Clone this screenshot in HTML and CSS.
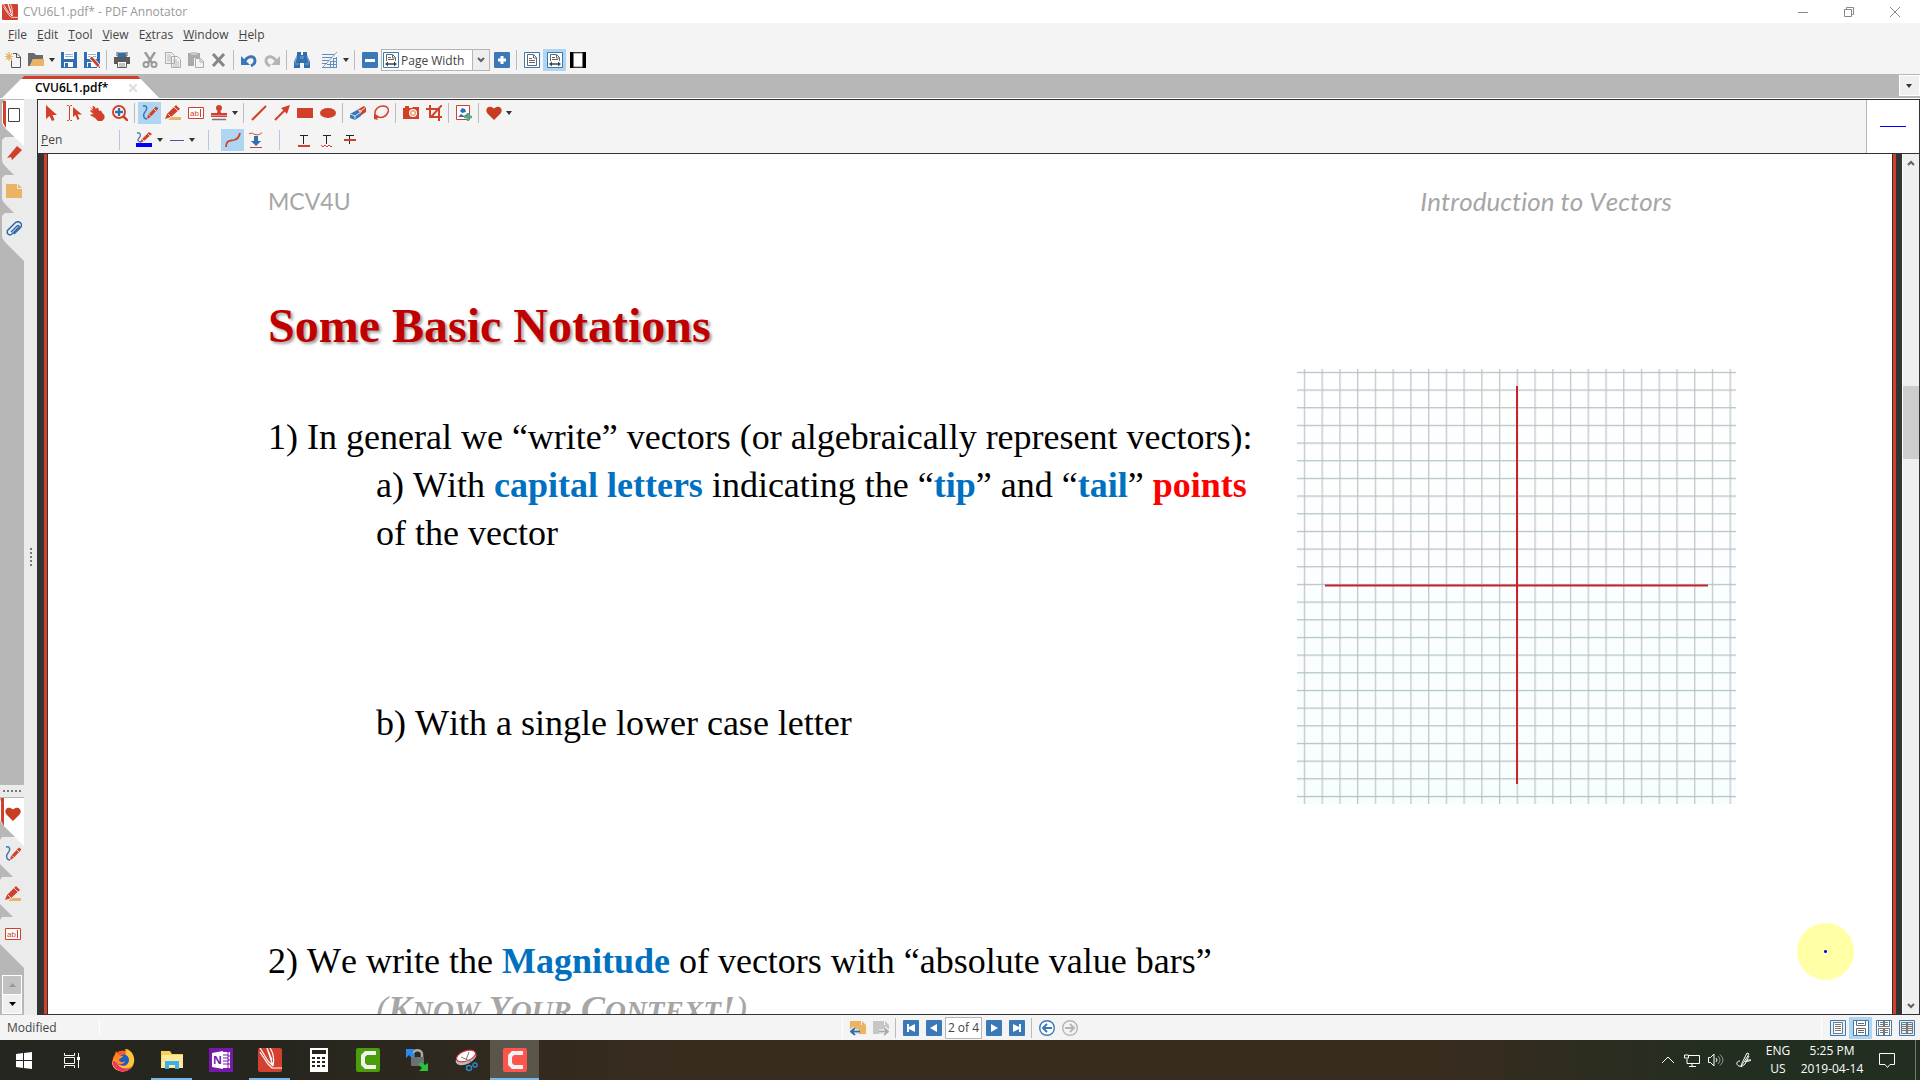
FILE: index.html
```
<!DOCTYPE html>
<html lang="en">
<head>
  <meta charset="UTF-8">
  <title>CVU6L1.pdf* - PDF Annotator</title>
  <meta name="viewport" content="width=device-width, initial-scale=1.0">
  <link rel="stylesheet" href="styles.css">
</head>
<body>
  <!-- icon sprite -->
  <svg class="sprite" aria-hidden="true">
    <symbol id="i-new" viewBox="0 0 16 16"><path d="M8 1.500h4l3.500 3.500v10.500h-9v-7M11.500 1.500v4h4" fill="none" stroke="#555" stroke-width="1"/><path d="M4 0v9M0 4.500h8M1 1.500l6 6M7 1.500l-6 6" stroke="#eab464" stroke-width="1.200"/></symbol>
    <symbol id="i-open" viewBox="0 0 16 16"><path d="M0 1h6l2 2h7v4H5L2 14H0z" fill="#6a6a6a"/><path d="M5 7h11v7H2z" fill="#eab464"/></symbol>
    <symbol id="i-save" viewBox="0 0 16 16"><path d="M0 0h16v16H0z" fill="#2f6fb0"/><path d="M3 0h10v7H3zM3 10h9v5H3z" fill="#fff"/><path d="M4 2h8v1H4zM4 4h8v1H4z" fill="#8fb3d6"/><path d="M4 11h3v4H4z" fill="#2f6fb0"/></symbol>
    <symbol id="i-print" viewBox="0 0 16 16"><path d="M3 0h10v4H3z" fill="#fff" stroke="#555"/><path d="M4 1h8v4H4z" fill="#2f6fb0"/><path d="M0 5h16v7H0z" fill="#5a5a5a"/><path d="M3.500 9.500h9v6h-9z" fill="#fff" stroke="#5a5a5a"/><path d="M5 12h6M5 14h6" stroke="#8a8a8a"/></symbol>
    <symbol id="i-cut" viewBox="0 0 16 16"><path d="M3 0l7 11M13 0L6 11" stroke="#9a9a9a" stroke-width="2.400"/><circle cx="4" cy="12.500" r="2.500" fill="none" stroke="#9a9a9a" stroke-width="2"/><circle cx="12" cy="12.500" r="2.500" fill="none" stroke="#9a9a9a" stroke-width="2"/></symbol>
    <symbol id="i-copy" viewBox="0 0 16 16"><path d="M.5.5h6l3 3v8h-9zM6.500 4.500h6l3 3v8h-9z" fill="#f4f4f4" stroke="#aaa"/><path d="M2 3h4M2 5h4M2 7h4M2 9h4M8 8h4M8 10h6M8 12h6M8 14h6" stroke="#b5b5b5"/></symbol>
    <symbol id="i-paste" viewBox="0 0 16 16"><path d="M0 1h12v5H6v8H0z" fill="#aaa"/><path d="M3 0h6v3H3z" fill="#c9c9c9"/><path d="M7.500 6.500h5l3 3v6h-8zM12 7v3h3" fill="#f4f4f4" stroke="#aaa"/></symbol>
    <symbol id="i-delete" viewBox="0 0 16 16"><path d="M2 2l11 12M13 2L2 14" stroke="#868686" stroke-width="3"/></symbol>
    <symbol id="i-undo" viewBox="0 0 16 16"><path d="M3 11C5 4 14 2 14 9c0 3-2 4-4 5" fill="none" stroke="#3b78b8" stroke-width="3"/><path d="M0 4v9h9z" fill="#3b78b8"/></symbol>
    <symbol id="i-redo" viewBox="0 0 16 16"><path d="M13 11C11 4 2 2 2 9c0 3 2 4 4 5" fill="none" stroke="#b5b5b5" stroke-width="3"/><path d="M16 4v9H7z" fill="#b5b5b5"/></symbol>
    <symbol id="i-find" viewBox="0 0 16 16"><path d="M3 0h4v3h2V0h4v3l3 7v6h-6v-5H6v5H0v-6l3-7z" fill="#2f6fb0"/><path d="M3 4l-2 7M13 4l2 7M7 4v3M9 4v3M1 12h4M11 12h4" stroke="#9ec0e0" stroke-width=".7"/></symbol>
    <symbol id="i-notes" viewBox="0 0 16 16"><path d="M0 2.500h12M0 5.500h10M0 8.500h7M0 11.500h5M0 15.500h15M5 12.500h10M8 9.500h7M11 6.500h4M14.500 5v11M11.500 7v9M8.500 10v6" stroke="#5d8fc2"/><path d="M15 0L1 15" stroke="#777" stroke-width=".7"/></symbol>
    <symbol id="i-minus" viewBox="0 0 16 16"><rect width="16" height="16" rx="1" fill="#3b78b8"/><path d="M3 8.500h10" stroke="#fff" stroke-width="3"/></symbol>
    <symbol id="i-plus" viewBox="0 0 16 16"><rect width="16" height="16" rx="1" fill="#3b78b8"/><path d="M4 8h8M8 4v8" stroke="#fff" stroke-width="3"/></symbol>
    <symbol id="i-page" viewBox="0 0 16 16"><path d="M.5.5h15v15H.5z" fill="#fff" stroke="#3b78b8"/><path d="M3.500 2.500h6l3 3v8h-9zM9.500 3v3h3M5 6.500h3M5 8.500h6M5 10.500h6" fill="none" stroke="#666"/></symbol>
    <symbol id="i-width" viewBox="0 0 16 16"><path d="M.5.5h15v15H.5z" fill="#fff" stroke="#3b78b8"/><path d="M3.500 9V2.500h6l3 3V9M9.500 3v3h3M5 5.500h3M5 7.500h6" fill="none" stroke="#666"/><path d="M4 12h8" stroke="#444" stroke-width="1.500"/><path d="M5 9.500L2 12l3 2.500zM11 9.500l3 2.500-3 2.500z" fill="#444"/></symbol>
    <symbol id="i-full" viewBox="0 0 16 16"><path d="M0 0h16v16H0z"/><path d="M3.500 1h9v14h-9z" fill="#fff" stroke="#777"/></symbol>
    <symbol id="i-dd" viewBox="0 0 7 4"><path d="M0 0h6L3 4z" fill="#333"/></symbol>
    <symbol id="i-chev" viewBox="0 0 8 8"><path d="M1 2l3 3 3-3" fill="none" stroke="#606060" stroke-width="2"/></symbol>
    <symbol id="i-arrow" viewBox="0 0 16 16"><path d="M3 0v14l3.500-3L9 16l2.500-1-2-5H14z" fill="#d2402a"/></symbol>
    <symbol id="i-textarrow" viewBox="0 0 16 16"><path d="M1 .5h1.500l1 1 1-1H6M1 15.500h1.500l1-1 1 1H6M3.500 1v14" stroke="#d2402a" fill="none"/><path d="M7 2v10l2.500-2 2 5 2-1-2-4.500H16z" fill="#d2402a"/></symbol>
    <symbol id="i-hand" viewBox="0 0 16 16"><path d="M1 2l3 2.500L3.500 1l2 .5L7 4l1-1.500 1.500 1L10 6l2-.5 1 2 2.500 3v3L13 16H9l-3-3-5-3 2-1 2 .5L1 6l1-1 2 1z" fill="#d2402a"/></symbol>
    <symbol id="i-zoom" viewBox="0 0 16 16"><circle cx="7" cy="7" r="6" fill="#fff" stroke="#d2402a" stroke-width="2"/><path d="M11 11l5 5" stroke="#d2402a" stroke-width="2.500"/><path d="M3 7h8M7 3v8" stroke="#2f6fb0" stroke-width="2.400"/></symbol>
    <symbol id="i-pen" viewBox="0 0 16 16"><path d="M1 1c5-1 4 4 2 6s-2 7 2 7" fill="none" stroke="#3b78b8" stroke-width="1.500"/><path d="M5 14l1-4 8-8.500 2.500 2L8.500 12z" fill="#d2402a"/><path d="M7 9.500l2 2M12 4l2 2" stroke="#fff" stroke-width=".8"/></symbol>
    <symbol id="i-marker" viewBox="0 0 16 16"><path d="M7 12h9v3H3z" fill="#eab464"/><path d="M0 14l2-5 9-9 4 4-9 8z" fill="#d2402a"/><path d="M3 9l3 3M9 2l4 4" stroke="#fff" stroke-width=".8"/></symbol>
    <symbol id="i-abl" viewBox="0 0 16 16"><path d="M.5 2.500h15v11H.5z" fill="#fff" stroke="#d2402a"/><text x="2" y="11" font-size="8" font-family="Liberation Sans, sans-serif" fill="#d2402a">ab</text><path d="M12.500 4v8" stroke="#d2402a"/></symbol>
    <symbol id="i-stamp" viewBox="0 0 16 16"><circle cx="8" cy="3" r="3" fill="#d2402a"/><path d="M7 4h2l1 4h6v4H0V8h6z" fill="#d2402a"/><path d="M0 10.500h16" stroke="#e08ab8"/><path d="M1 14.500h14" stroke="#777" stroke-width="1.500"/></symbol>
    <symbol id="i-line" viewBox="0 0 16 16"><path d="M1 15L15 1" stroke="#d2402a" stroke-width="2"/></symbol>
    <symbol id="i-vec" viewBox="0 0 16 16"><path d="M1 15L12 4" stroke="#d2402a" stroke-width="2"/><path d="M16 0l-3 9-6-6z" fill="#d2402a"/></symbol>
    <symbol id="i-rect" viewBox="0 0 16 16"><path d="M0 3h16v10H0z" fill="#d2402a"/></symbol>
    <symbol id="i-ellipse" viewBox="0 0 16 16"><ellipse cx="8" cy="8" rx="8" ry="5" fill="#d2402a"/></symbol>
    <symbol id="i-eraser" viewBox="0 0 16 16"><path d="M7 5l7-4 2 2v4l-6 4z" fill="#d2402a"/><path d="M0 9l7-4 4 2v4l-6 4-5-2z" fill="#3b78b8"/><path d="M0 9l5 2 6-4M5 11v3.500M8 5l4 1.500M9 7l6-4" stroke="#fff" stroke-width=".8" fill="none"/></symbol>
    <symbol id="i-lasso" viewBox="0 0 16 16"><path d="M3 11C0 7 4 1 10 1c5 0 7 4 4 8-2 3-6 4-10 3" fill="none" stroke="#d2402a" stroke-width="1.500"/><path d="M1 9l5 2-2 2 1 2-4-1z" fill="#d2402a"/></symbol>
    <symbol id="i-camera" viewBox="0 0 16 16"><path d="M0 3h2V1h4v2h3l1-1h6v12H0z" fill="#d2402a"/><circle cx="10" cy="8" r="4" fill="#fff"/><circle cx="10" cy="8" r="3" fill="#eba070"/><circle cx="10" cy="8" r="1.500" fill="#fff"/></symbol>
    <symbol id="i-crop" viewBox="0 0 16 16"><path d="M0 4h13v12M4 0v12h12M5 12L16 0" fill="none" stroke="#d2402a" stroke-width="2"/></symbol>
    <symbol id="i-image" viewBox="0 0 16 16"><path d="M.5.500h13v14H.5z" fill="#fff" stroke="#d2402a"/><path d="M2 12l3-3 3 2 4-3v4zM4 6l2-3 3 1 1 3-4 1z" fill="#2f6fb0"/><path d="M8 12h8M12 8v8" stroke="#4bb18a" stroke-width="2.500"/></symbol>
    <symbol id="i-heart" viewBox="0 0 16 16"><path d="M8 15L1.500 8.500C-2 4 3-1 8 3.500 13-1 18 4 14.500 8.500z" fill="#c63d20"/></symbol>
    <symbol id="i-pencolor" viewBox="0 0 16 16"><path d="M1 1c4-1 4 3 2 5s-1 4 2 4" fill="none" stroke="#3b78b8" stroke-width="1.300"/><path d="M4 11l1-3 8-8 3 2-8 7z" fill="#d2402a"/><path d="M6 7l2 2M12 2l2 2" stroke="#fff" stroke-width=".8"/><path d="M0 11h16v4H0z" fill="#00f"/></symbol>
    <symbol id="i-thin" viewBox="0 0 16 16"><path d="M1 8.500h14" stroke="#4a5a8a"/></symbol>
    <symbol id="i-curve" viewBox="0 0 16 16"><path d="M1 15c0-7 4-6 8-7 3-1 5-2 6-7" fill="none" stroke="#d2402a" stroke-width="1.800"/></symbol>
    <symbol id="i-press" viewBox="0 0 16 16"><path d="M1 2c3-2 4 0 6 .5S12 3 14 .5M2 15.500h12" fill="none" stroke="#d2402a"/><path d="M6 4h4v5h3l-5 5-5-5h3z" fill="#2f6fb0"/></symbol>
    <symbol id="i-tu" viewBox="0 0 16 16"><path d="M4 3.500h8M7.500 3v9" stroke="#222"/><path d="M2 14h12" stroke="#d2402a" stroke-width="2"/></symbol>
    <symbol id="i-tw" viewBox="0 0 16 16"><path d="M4 3.500h8M7.500 3v9" stroke="#222"/><path d="M2 13l2 2 2-2 2 2 2-2 2 2 1-1" fill="none" stroke="#d2402a"/></symbol>
    <symbol id="i-ts" viewBox="0 0 16 16"><path d="M4 3.500h8M7.500 3v9" stroke="#222"/><path d="M2 8h12" stroke="#d2402a" stroke-width="2"/></symbol>
    <symbol id="i-sheet" viewBox="0 0 16 16"><path d="M2.500 1.500h11v13h-11z" fill="#fff" stroke="#444"/></symbol>
    <symbol id="i-mark" viewBox="0 0 16 16"><path d="M11 1l5 4L6 15l-1-3-4 1z" fill="#d2402a"/></symbol>
    <symbol id="i-note" viewBox="0 0 16 16"><path d="M0 1h11v5h5v9H0zM12 1l4 4h-4z" fill="#eab464"/></symbol>
    <symbol id="i-clip" viewBox="0 0 16 16"><path d="M5 11l6-6c1.500-1 3 0 1.500 1.500L6 13c-2 2-6 0-4.500-3.500L9 2c3-3 8 0 6 4l-7 7" fill="none" stroke="#2a65a8" stroke-width="1.400"/></symbol>
    <symbol id="i-noteback" viewBox="0 0 16 16"><path d="M0 1h11v4h5v9H0zM12 1l4 4h-4z" fill="#eab464"/><path d="M9 11.500H1M5 8l-4 3.500L5 15" stroke="#fff" stroke-width="4" fill="none"/><path d="M10 11.500H1M5 8l-4 3.500L5 15" stroke="#2f6fb0" stroke-width="2" fill="none"/></symbol>
    <symbol id="i-notefwd" viewBox="0 0 16 16"><path d="M0 1h11v4h5v9H0zM12 1l4 4h-4z" fill="#c6c6c6"/><path d="M6 11.500h9M11 8l4 3.500-4 3.500" stroke="#fff" stroke-width="4" fill="none"/><path d="M6 11.500h9M11 8l4 3.500-4 3.500" stroke="#aaa" stroke-width="2" fill="none"/></symbol>
    <symbol id="i-first" viewBox="0 0 16 16"><rect width="16" height="16" rx="1" fill="#3b78b8"/><path d="M4 4h2v3l6-3v8L6 9v3H4z" fill="#fff"/></symbol>
    <symbol id="i-prev" viewBox="0 0 16 16"><rect width="16" height="16" rx="1" fill="#3b78b8"/><path d="M4 8l7-4v8z" fill="#fff"/></symbol>
    <symbol id="i-next" viewBox="0 0 16 16"><rect width="16" height="16" rx="1" fill="#3b78b8"/><path d="M12 8L5 4v8z" fill="#fff"/></symbol>
    <symbol id="i-last" viewBox="0 0 16 16"><rect width="16" height="16" rx="1" fill="#3b78b8"/><path d="M12 4h-2v3L4 4v8l6-3v3h2z" fill="#fff"/></symbol>
    <symbol id="i-back" viewBox="0 0 16 16"><circle cx="8" cy="8" r="7.300" fill="#fff" stroke="#3b78b8" stroke-width="1.400"/><path d="M13 8H4M8 4L4 8l4 4" fill="none" stroke="#3b78b8" stroke-width="2"/></symbol>
    <symbol id="i-fwd" viewBox="0 0 16 16"><circle cx="8" cy="8" r="7.300" fill="none" stroke="#b5b5b5" stroke-width="1.400"/><path d="M3 8h9M8 4l4 4-4 4" fill="none" stroke="#b5b5b5" stroke-width="2"/></symbol>
    <symbol id="i-v1" viewBox="0 0 16 16"><path d="M.5.5h15v15H.5z" fill="#e8f1fa" stroke="#3b78b8"/><path d="M3.500 2.500h9v11h-9z" fill="#fff" stroke="#777"/><path d="M5 4.500h6M5 6.500h6M5 8.500h6M5 10.500h6" stroke="#777"/></symbol>
    <symbol id="i-v2" viewBox="0 0 16 16"><path d="M.5.5h15v15H.5z" fill="#fff" stroke="#3b78b8"/><path d="M3.500 1v4.500h9V1M3.500 15V8.500h9V15M5 3.500h6M5 10.500h6M5 12.500h6" fill="none" stroke="#666"/></symbol>
    <symbol id="i-v3" viewBox="0 0 16 16"><path d="M.5.5h15v15H.5z" fill="#fff" stroke="#3b78b8"/><path d="M2.500 1v5.500h11V1M2.500 15V8.500h11V15M7.500 1v5.500M7.500 9v6M8.500 1v5.500M8.500 9v6M4 2.500h8M4 4.500h8M4 10.500h8M4 12.500h8" fill="none" stroke="#777"/></symbol>
    <symbol id="i-v4" viewBox="0 0 16 16"><path d="M.5.5h15v15H.5z" fill="#e8f1fa" stroke="#3b78b8"/><path d="M2.500 2.500h11v11h-11zM7.500 3v10M8.500 3v10M3 4.500h10M3 6.500h10M3 8.500h10M3 10.500h10" fill="none" stroke="#777"/></symbol>
    <symbol id="i-logo" viewBox="0 0 24 24"><rect width="24" height="24" rx="2" fill="#d2402f"/><path d="M2 0l8 13 5 5L9 0M9 0l5 12M12 0c4 6 4 13 3 18M2 4l8 12 4 4h10" fill="none" stroke="#fff" stroke-width="1.200"/></symbol>
  </svg>

  <div class="app">
    <header class="titlebar">
      <svg class="icon"><use href="#i-logo"/></svg>
      <span class="title">CVU6L1.pdf* - PDF Annotator</span>
      <div class="window-buttons">
        <button aria-label="Minimize"><svg viewBox="0 0 10 10"><path d="M0 5.500h10"/></svg></button>
        <button aria-label="Restore"><svg viewBox="0 0 10 10"><path d="M.5 2.500h7v7h-7zM2.500 2V.5h7v7H8"/></svg></button>
        <button aria-label="Close"><svg viewBox="0 0 10 10"><path d="M0 0l10 10M10 0L0 10"/></svg></button>
      </div>
    </header>

    <nav class="menubar">
      <button><u>F</u>ile</button>
      <button><u>E</u>dit</button>
      <button><u>T</u>ool</button>
      <button><u>V</u>iew</button>
      <button>E<u>x</u>tras</button>
      <button><u>W</u>indow</button>
      <button><u>H</u>elp</button>
    </nav>

    <div class="toolbar main-toolbar">
      <button class="tool" aria-label="New"><svg class="icon"><use href="#i-new"/></svg></button>
      <button class="tool" aria-label="Open"><svg class="icon"><use href="#i-open"/></svg></button>
      <button class="drop" aria-label="Recent files"><svg><use href="#i-dd"/></svg></button>
      <button class="tool" aria-label="Save"><svg class="icon"><use href="#i-save"/></svg></button>
      <button class="tool" aria-label="Save as"><svg class="icon" viewBox="0 0 16 16"><use href="#i-save" width="16" height="16"/><path d="M5 6l3-2 8 9-2 3z" fill="#d2402a" stroke="#fff"/></svg></button>
      <span class="sep"></span>
      <button class="tool" aria-label="Print"><svg class="icon"><use href="#i-print"/></svg></button>
      <span class="gap"></span>
      <button class="tool" aria-label="Cut"><svg class="icon"><use href="#i-cut"/></svg></button>
      <button class="tool" aria-label="Copy"><svg class="icon"><use href="#i-copy"/></svg></button>
      <button class="tool" aria-label="Paste"><svg class="icon"><use href="#i-paste"/></svg></button>
      <button class="tool" aria-label="Delete"><svg class="icon"><use href="#i-delete"/></svg></button>
      <span class="sep"></span>
      <button class="tool" aria-label="Undo"><svg class="icon"><use href="#i-undo"/></svg></button>
      <button class="tool" aria-label="Redo"><svg class="icon"><use href="#i-redo"/></svg></button>
      <span class="sep"></span>
      <button class="tool" aria-label="Find"><svg class="icon"><use href="#i-find"/></svg></button>
      <span class="gap"></span>
      <button class="tool" aria-label="Page background"><svg class="icon"><use href="#i-notes"/></svg></button>
      <button class="drop" aria-label="Background options"><svg><use href="#i-dd"/></svg></button>
      <span class="sep"></span>
      <button class="tool" aria-label="Zoom out"><svg class="icon"><use href="#i-minus"/></svg></button>
      <div class="zoom-box">
        <svg class="icon"><use href="#i-width"/></svg>
        <select aria-label="Zoom"><option>Page Width</option><option>Full Page</option></select>
        <span class="zoom-arrow"><svg><use href="#i-chev"/></svg></span>
      </div>
      <button class="tool" aria-label="Zoom in"><svg class="icon"><use href="#i-plus"/></svg></button>
      <span class="sep"></span>
      <button class="tool" aria-label="Full page"><svg class="icon"><use href="#i-page"/></svg></button>
      <button class="tool active" aria-label="Page width"><svg class="icon"><use href="#i-width"/></svg></button>
      <button class="tool" aria-label="Full screen"><svg class="icon"><use href="#i-full"/></svg></button>
    </div>

    <div class="tabstrip">
      <div class="tab"><button class="tab-name">CVU6L1.pdf*</button><button class="tab-close" aria-label="Close tab"><svg viewBox="0 0 8 8"><path d="M0 0l8 8M8 0L0 8"/></svg></button></div>
      <button class="tab-list" aria-label="List tabs"><svg><use href="#i-dd"/></svg></button>
    </div>

    <main class="workspace">
      <aside class="sidebar">
        <button class="side-tab active" aria-label="Pages"><svg class="shape" viewBox="0 0 24 48"><path d="M2 5l3-4h19v46L6 30q-4-4-4-7z"/><path class="stripe" d="M3 2h3v27l-3-5z"/></svg><svg class="icon"><use href="#i-sheet"/></svg></button>
        <button class="side-tab" aria-label="Bookmarks"><svg class="shape" viewBox="0 0 24 48"><path d="M2 3l3-3h19v48L6 30q-4-4-4-7z"/></svg><svg class="icon"><use href="#i-mark"/></svg></button>
        <button class="side-tab" aria-label="Notes"><svg class="shape" viewBox="0 0 24 48"><path d="M2 3l3-3h19v48L6 30q-4-4-4-7z"/></svg><svg class="icon"><use href="#i-note"/></svg></button>
        <button class="side-tab" aria-label="Attachments"><svg class="shape" viewBox="0 0 24 48"><path d="M2 3l3-3h19v48L6 30q-4-4-4-7z"/></svg><svg class="icon"><use href="#i-clip"/></svg></button>
        <div class="side-fill"></div>
        <div class="side-grip"><i></i><i></i><i></i><i></i><i></i></div>
        <div class="toolbox">
          <button class="side-tab active" aria-label="Favorites"><svg class="shape" viewBox="0 0 24 48"><path d="M0 4l3-3h21v48L4 29q-4-4-4-7z"/><path class="stripe" d="M1 1h3v28l-3-5z"/></svg><svg class="icon"><use href="#i-heart"/></svg></button>
          <button class="side-tab" aria-label="Pens"><svg class="shape" viewBox="0 0 24 48"><path d="M0 3l2-3h22v51L0 27z"/></svg><svg class="icon"><use href="#i-pen"/></svg></button>
          <button class="side-tab" aria-label="Markers"><svg class="shape" viewBox="0 0 24 48"><path d="M0 3l2-3h22v51L0 27z"/></svg><svg class="icon"><use href="#i-marker"/></svg></button>
          <button class="side-tab" aria-label="Text"><svg class="shape" viewBox="0 0 24 48"><path d="M0 3l2-3h22v51L0 27z"/></svg><svg class="icon"><use href="#i-abl"/></svg></button>
        </div>
        <div class="side-scroll">
          <button class="disabled" aria-label="Scroll up" disabled><svg viewBox="0 0 7 4"><path d="M0 4h7L3.500 0z"/></svg></button>
          <button aria-label="Scroll down"><svg viewBox="0 0 7 4"><path d="M0 0h7L3.500 4z"/></svg></button>
        </div>
      </aside>
      <div class="splitter"><i></i><i></i><i></i><i></i><i></i></div>

      <section class="editor">
        <div class="tool-panel">
          <div class="tool-rows">
            <div class="toolbar">
              <button class="tool" aria-label="Select"><svg class="icon"><use href="#i-arrow"/></svg></button>
              <button class="tool" aria-label="Select text"><svg class="icon"><use href="#i-textarrow"/></svg></button>
              <button class="tool" aria-label="Pan"><svg class="icon"><use href="#i-hand"/></svg></button>
              <button class="tool" aria-label="Zoom"><svg class="icon"><use href="#i-zoom"/></svg></button>
              <span class="sep"></span>
              <button class="tool active" aria-label="Pen"><svg class="icon"><use href="#i-pen"/></svg></button>
              <button class="tool" aria-label="Marker"><svg class="icon"><use href="#i-marker"/></svg></button>
              <button class="tool" aria-label="Text"><svg class="icon"><use href="#i-abl"/></svg></button>
              <button class="tool" aria-label="Stamp"><svg class="icon"><use href="#i-stamp"/></svg></button>
              <button class="drop" aria-label="Stamps"><svg><use href="#i-dd"/></svg></button>
              <span class="sep"></span>
              <button class="tool" aria-label="Line"><svg class="icon"><use href="#i-line"/></svg></button>
              <button class="tool" aria-label="Arrow"><svg class="icon"><use href="#i-vec"/></svg></button>
              <button class="tool" aria-label="Rectangle"><svg class="icon"><use href="#i-rect"/></svg></button>
              <button class="tool" aria-label="Ellipse"><svg class="icon"><use href="#i-ellipse"/></svg></button>
              <span class="sep"></span>
              <button class="tool" aria-label="Eraser"><svg class="icon"><use href="#i-eraser"/></svg></button>
              <button class="tool" aria-label="Lasso"><svg class="icon"><use href="#i-lasso"/></svg></button>
              <span class="sep"></span>
              <button class="tool" aria-label="Snapshot"><svg class="icon"><use href="#i-camera"/></svg></button>
              <button class="tool" aria-label="Crop"><svg class="icon"><use href="#i-crop"/></svg></button>
              <span class="sep"></span>
              <button class="tool" aria-label="Insert image"><svg class="icon"><use href="#i-image"/></svg></button>
              <span class="sep"></span>
              <button class="tool" aria-label="Favorites"><svg class="icon"><use href="#i-heart"/></svg></button>
              <button class="drop near" aria-label="Favorites menu"><svg><use href="#i-dd"/></svg></button>
            </div>
            <div class="toolbar options">
              <span class="tool-name"><u>P</u>en</span>
              <span class="sep"></span>
              <button class="tool" aria-label="Color"><svg class="icon"><use href="#i-pencolor"/></svg></button>
              <button class="drop" aria-label="Colors"><svg><use href="#i-dd"/></svg></button>
              <button class="tool" aria-label="Line width"><svg class="icon"><use href="#i-thin"/></svg></button>
              <button class="drop near" aria-label="Line widths"><svg><use href="#i-dd"/></svg></button>
              <span class="sep"></span>
              <button class="tool active" aria-label="Smooth"><svg class="icon"><use href="#i-curve"/></svg></button>
              <button class="tool" aria-label="Pressure"><svg class="icon"><use href="#i-press"/></svg></button>
              <span class="sep"></span>
              <button class="tool" aria-label="Underline text"><svg class="icon"><use href="#i-tu"/></svg></button>
              <button class="tool" aria-label="Squiggly underline"><svg class="icon"><use href="#i-tw"/></svg></button>
              <button class="tool" aria-label="Strike out"><svg class="icon"><use href="#i-ts"/></svg></button>
            </div>
          </div>
          <div class="preview"><span></span></div>
        </div>

        <div class="viewer">
          <article class="page">
            <div class="page-header"><span>MCV4U</span><em>Introduction to Vectors</em></div>
            <h1>Some Basic Notations</h1>
            <div class="page-body">
              <div class="notes">
                <p>1) In general we “write” vectors (or algebraically represent vectors):</p>
                <p class="sub">a) With <b>capital letters</b> indicating the “<b>tip</b>” and “<b>tail</b>” <b class="red">points</b><br>of the vector</p>
                <p class="sub spaced">b) With a single lower case letter</p>
                <p class="spaced last">2) We write the <b>Magnitude</b> of vectors with “absolute value bars”</p>
                <p class="sub context">(<b>K<small>NOW</small> Y<small>OUR</small> C<small>ONTEXT</small>!</b>)</p>
              </div>
              <svg class="graph" viewBox="0 0 439 435">
                <defs>
                  <linearGradient id="paper" x2="0" y2="1"><stop offset="0" stop-color="#fff"/><stop offset="1" stop-color="#f8fdfe"/></linearGradient>
                  <pattern id="cols" x="6.800" width="17.740" height="435" patternUnits="userSpaceOnUse"><path d="M.7 0v435" stroke="#bcc2ca" stroke-width="1.200"/></pattern>
                  <pattern id="rows" y="2.800" width="439" height="17.670" patternUnits="userSpaceOnUse"><path d="M0 .7h439" stroke="#b0c2c6" stroke-width="1.200"/></pattern>
                </defs>
                <rect width="439" height="435" fill="url(#paper)"/>
                <rect width="439" height="435" fill="url(#cols)"/>
                <rect width="439" height="435" fill="url(#rows)"/>
                <path d="M220 17v398M28 216.500h383" stroke="#c8242c" stroke-width="2"/>
              </svg>
            </div>
            <span class="pointer"></span>
          </article>
          <div class="scrollbar">
            <button aria-label="Scroll up"><svg class="up"><use href="#i-chev"/></svg></button>
            <div class="track"><div class="thumb"></div></div>
            <button aria-label="Scroll down"><svg><use href="#i-chev"/></svg></button>
          </div>
        </div>
      </section>
    </main>

    <footer class="statusbar">
      <span class="state">Modified</span>
      <div class="toolbar pager">
        <button class="tool" aria-label="Previous annotated page"><svg class="icon"><use href="#i-noteback"/></svg></button>
        <button class="tool" aria-label="Next annotated page"><svg class="icon"><use href="#i-notefwd"/></svg></button>
        <span class="sep"></span>
        <button class="tool" aria-label="First page"><svg class="icon"><use href="#i-first"/></svg></button>
        <button class="tool" aria-label="Previous page"><svg class="icon"><use href="#i-prev"/></svg></button>
        <input type="text" aria-label="Page" value="2 of 4">
        <button class="tool" aria-label="Next page"><svg class="icon"><use href="#i-next"/></svg></button>
        <button class="tool" aria-label="Last page"><svg class="icon"><use href="#i-last"/></svg></button>
        <span class="sep"></span>
        <button class="tool" aria-label="Back"><svg class="icon"><use href="#i-back"/></svg></button>
        <button class="tool" aria-label="Forward"><svg class="icon"><use href="#i-fwd"/></svg></button>
      </div>
      <div class="toolbar views">
        <button class="tool" aria-label="Single page"><svg class="icon"><use href="#i-v1"/></svg></button>
        <button class="tool active" aria-label="Continuous"><svg class="icon"><use href="#i-v2"/></svg></button>
        <button class="tool" aria-label="Two pages continuous"><svg class="icon"><use href="#i-v3"/></svg></button>
        <button class="tool" aria-label="Two pages"><svg class="icon"><use href="#i-v4"/></svg></button>
      </div>
    </footer>
  </div>

  <div class="taskbar">
    <div class="system">
      <button class="task" aria-label="Start"><svg viewBox="0 0 24 24"><path d="M4 6l7-1v7H4zM12 5l8-1v8h-8zM4 13h7v7l-7-1zM12 13h8v8l-8-1z" fill="#fff"/></svg></button>
      <button class="task" aria-label="Task view"><svg viewBox="0 0 24 24"><path d="M4.500 5v2.500h10V5M4.500 20v-2.500h10V20M4.500 9.500h10v6h-10zM18.500 5v15" fill="none" stroke="#fff"/><path d="M17 9h3v3h-3z" fill="#fff"/></svg></button>
    </div>
    <button class="task" aria-label="Firefox"><svg viewBox="0 0 24 24"><circle cx="12" cy="13" r="10.500" fill="#ff5a2c"/><path d="M1 14c0 12 20 13 22 0 1-4-1-9-4-11-2-2-4-2-5-2 2 3-1 4 2 7 3 5 1 10-4 10S3 14 4 9z" fill="#ffc43a"/><path d="M1.500 13c0 6 5 11 11 10 4 0 7-2 9-5-6 5-15 2-16-5z" fill="#f0326a"/><circle cx="12.500" cy="12" r="5.500" fill="#1c5fc4"/><path d="M5 3l2 4 5 1c-1 3-4 2-4 4 1 3 5 2 6 1-1 5-9 4-11-1z" fill="#ff8a1e"/></svg></button>
    <button class="task open" aria-label="File Explorer"><svg viewBox="0 0 24 24"><path d="M1 3h9l2 3h11v14H1z" fill="#f7cf57"/><path d="M2 7h21v13H1z" fill="#ffe79b"/><path d="M5 13h14v8h-4v-4H9v4H5z" fill="#38b2ea"/></svg></button>
    <button class="task" aria-label="OneNote"><svg viewBox="0 0 24 24"><path d="M0 0h24v24H0z" fill="#7719aa"/><path d="M13 4h8v16h-8z" fill="#fff"/><path d="M19 4v16M14 7h5M14 10h5M14 13h5M14 16h5M19 8h3M19 12h3M19 16h3" stroke="#7719aa"/><path d="M3 5l11-2v18L3 19z" fill="#fff"/><text x="4" y="16" font-size="11" font-weight="700" font-family="Open Sans, sans-serif" fill="#7719aa">N</text></svg></button>
    <button class="task open" aria-label="PDF Annotator"><svg><use href="#i-logo"/></svg></button>
    <button class="task" aria-label="Calculator"><svg viewBox="0 0 24 24"><path d="M3 0h18v24H3z" fill="#fff"/><path d="M5 2h14v4H5zM5 9h3v2H5zM10 9h3v2h-3zM15 9h3v2h-3zM5 13h3v2H5zM10 13h3v2h-3zM15 13h3v2h-3zM5 17h3v2H5zM10 17h3v2h-3zM15 17h3v2h-3z" fill="#24251d"/></svg></button>
    <button class="task" aria-label="Camtasia"><svg viewBox="0 0 24 24"><rect width="24" height="24" rx="2" fill="#4a9e0a"/><path d="M20 3H9L5 7v10l4 4h11v-4h-9l-2-2V9l2-2h9z" fill="#f2f2f2"/></svg></button>
    <button class="task" aria-label="Secure transfer"><svg viewBox="0 0 24 24"><path d="M8 10V6c0-5 9-5 9 0v4" fill="none" stroke="#aaa" stroke-width="2.500"/><rect x="6" y="9" width="13" height="9" rx="1" fill="#6d7072"/><path d="M1 1h9L7 4l3 3-3 3-3-3-3 3z" fill="#2a8af0"/><path d="M23 23h-9l3-3-4-4 3-2 4 3 3-2z" fill="#2dc040"/></svg></button>
    <button class="task" aria-label="Snipping Tool"><svg viewBox="0 0 24 24"><ellipse cx="12" cy="10" rx="11" ry="6" transform="rotate(-25 12 10)" fill="#bbb"/><ellipse cx="12" cy="8" rx="10" ry="5" transform="rotate(-20 12 8)" fill="#fff" stroke="#dd2c3c" stroke-width="1.200"/><path d="M15 4l-3 8M7 9l11 5" stroke="#777"/><circle cx="15" cy="20" r="2.500" fill="none" stroke="#2b86c8" stroke-width="1.500"/><circle cx="21" cy="17" r="2" fill="none" stroke="#2b86c8" stroke-width="1.500"/></svg></button>
    <button class="task open current" aria-label="Camtasia Recorder"><svg viewBox="0 0 24 24"><rect width="24" height="24" rx="2" fill="#ff544c"/><path d="M20 3H9L5 7v10l4 4h11v-4h-9l-2-2V9l2-2h9z" fill="#f2f2f2"/></svg></button>
    <div class="tray">
      <button aria-label="Hidden icons"><svg viewBox="0 0 16 16"><path d="M2 11l6-6 6 6"/></svg></button>
      <button aria-label="Network"><svg viewBox="0 0 16 16"><path d="M5 3.500h10.500v8H3V7M8 12v2.500M5 14.500h7M.5 3v3h4V3z"/></svg></button>
      <button aria-label="Volume"><svg viewBox="0 0 16 16"><path d="M.5 5.500h2L6 2v12l-3.500-3.500h-2zM8 6q2 2 0 4"/><path d="M10 4q4 4 0 8M12 2.500q6 5.500 0 11" stroke-opacity=".5"/></svg></button>
      <button class="ink" aria-label="Ink workspace"><svg viewBox="0 0 16 16"><path d="M4 9c-4 0-4 4-1 5s3-2 5-4l5-8-2-1-5 10-1 4 4-3 4-8M9 10q3-3 6-2-2 2-5 1"/></svg></button>
      <div class="lang"><span>ENG</span><span>US</span></div>
      <div class="clock"><span>5:25 PM</span><span>2019-04-14</span></div>
      <button class="action" aria-label="Notifications"><svg viewBox="0 0 16 16"><path d="M.5 1.500h15v11H11l-2.500 3-2.500-3H.500z"/></svg></button>
      <span class="show-desktop"></span>
    </div>
  </div>
</body>
</html>
```
FILE: styles.css
```
* {
  box-sizing: border-box;
}
body {
  margin: 0;
  height: 100vh;
  display: flex;
  flex-direction: column;
  overflow: hidden;
  font-family: "Open Sans", "Noto Sans", sans-serif;
  font-size: 12px;
  color: #444;
  background: #f4f4f4;
}
button, input, select {
  font: inherit;
  color: inherit;
  margin: 0;
  padding: 0;
  border: 0;
  background: none;
}
svg {
  display: block;
}
.sprite {
  display: none;
}
.icon {
  width: 16px;
  height: 16px;
  flex: none;
}
.app {
  flex: 1;
  min-height: 0;
  display: flex;
  flex-direction: column;
}

/* title and menu */
.titlebar {
  display: flex;
  align-items: center;
  height: 23px;
  padding: 0 2px;
  background: #fff;
  color: #999;
}
.title {
  margin-left: 5px;
}
.window-buttons {
  display: flex;
  margin-left: auto;
}
.window-buttons button {
  display: flex;
  justify-content: center;
  width: 46px;
}
.window-buttons svg {
  width: 10px;
  height: 10px;
  fill: none;
  stroke: #888;
}
.menubar {
  display: flex;
  height: 25px;
  gap: 10px;
  padding: 0 0 2px 8px;
}
.toolbar {
  display: flex;
  align-items: center;
}
.main-toolbar {
  height: 26px;
  padding: 0 0 2px 1px;
}
.tool {
  display: flex;
  align-items: center;
  justify-content: center;
  width: 23px;
  height: 22px;
  flex: none;
}
.tool.active {
  background: #aed5f2;
}
.drop {
  display: flex;
  justify-content: center;
  width: 10px;
}
.drop.near {
  width: 8px;
}
.drop svg, .tab-list svg {
  width: 7px;
  height: 4px;
}
.sep {
  width: 1px;
  height: 20px;
  margin: 0 3px;
  background: #bbb;
}
.gap {
  width: 5px;
}
.zoom-box {
  display: flex;
  align-items: center;
  width: 109px;
  height: 22px;
  padding-left: 1px;
  border: 1px solid #b5b5b5;
  background: #fff;
}
.zoom-box select {
  flex: 1;
  min-width: 0;
  height: 20px;
  padding-left: 2px;
  appearance: none;
}
.zoom-arrow {
  display: flex;
  align-items: center;
  justify-content: center;
  width: 17px;
  height: 20px;
  border-left: 1px solid #b5b5b5;
  background: #eee;
}
.zoom-arrow svg, .scrollbar svg {
  width: 8px;
  height: 8px;
}

/* document tabs */
.tabstrip {
  display: flex;
  align-items: flex-end;
  justify-content: space-between;
  height: 25px;
  padding-left: 2px;
  background: #b7b7b7;
  border-bottom: 1px solid #fff;
}
.tab {
  display: flex;
  align-items: center;
  width: 157px;
  height: 22px;
  padding: 0 22px 2px 33px;
  justify-content: space-between;
  border-top: 3px solid #d2402a;
  background: #fff;
  clip-path: polygon(22px 0, 136px 0, 157px 22px, 0 22px);
}
.tab-name {
  color: #000;
  font-weight: 600;
}
.tab-close svg {
  width: 8px;
  height: 8px;
  stroke: #ddd;
  stroke-width: 2;
}
.tab-list {
  display: flex;
  align-items: center;
  justify-content: center;
  width: 21px;
  height: 21px;
  margin-bottom: 2px;
  background: #efefef;
  border: 1px solid #fff;
}

/* left sidebar */
.workspace {
  flex: 1;
  min-height: 0;
  display: flex;
}
.sidebar {
  display: flex;
  flex-direction: column;
  width: 24px;
  background: #b7b7b7;
}
.side-tab {
  position: relative;
  height: 38px;
  padding: 8px 0 0 6px;
}
.side-tab .shape {
  position: absolute;
  left: 0;
  top: 0;
  width: 24px;
  height: 48px;
  overflow: visible;
  fill: #ebebeb;
}
.side-tab .icon {
  position: relative;
  margin-bottom: 14px;
}
.side-tab.active {
  z-index: 1;
}
.side-tab.active .shape {
  fill: #fff;
}
.shape .stripe {
  fill: #d2402a;
}
.side-fill {
  flex: 1;
}
.side-grip {
  display: flex;
  gap: 2px;
  height: 12px;
  padding: 5px 3px;
  background: #ebebeb;
}
.side-grip i, .splitter i {
  width: 2px;
  height: 2px;
  background: #777;
}
.toolbox {
  display: flex;
  flex-direction: column;
  height: 178px;
}
.toolbox .side-tab {
  height: 40px;
  padding-left: 5px;
}
.side-scroll {
  display: flex;
  flex-direction: column;
  width: 20px;
  margin: 0 0 1px 2px;
  border: 1px solid #fff;
}
.side-scroll button {
  display: flex;
  align-items: center;
  justify-content: center;
  height: 18px;
  background: #efefef;
}
.side-scroll .disabled {
  height: 19px;
  background: #c2c2c2;
  border-bottom: 1px solid #fff;
  fill: #999;
}
.side-scroll svg {
  width: 7px;
  height: 4px;
}
.splitter {
  display: flex;
  flex-direction: column;
  align-items: center;
  justify-content: center;
  gap: 2px;
  width: 13px;
  background: #ebebeb;
}

/* editor */
.editor {
  flex: 1;
  min-width: 0;
  display: flex;
  flex-direction: column;
  border: 1px solid #333;
  border-left: 0;
}
.tool-panel {
  display: flex;
  justify-content: space-between;
  border-left: 1px solid #333;
  border-bottom: 1px solid #333;
}
.tool-rows .toolbar {
  height: 27px;
  padding: 0 0 1px 1px;
}
.tool-rows .options {
  height: 26px;
}
.options .sep {
  margin: 0 12px;
  background: #b4c7dc;
}
.tool-name {
  width: 68px;
  padding-left: 2px;
}
.preview {
  display: flex;
  align-items: center;
  justify-content: center;
  width: 53px;
  border-left: 1px solid #b5b5b5;
  background: #fff;
}
.preview span {
  width: 26px;
  height: 1px;
  background: #00f;
}
.viewer {
  flex: 1;
  min-height: 0;
  display: flex;
  padding-left: 7px;
  background: #333;
}
.page {
  position: relative;
  flex: 1;
  min-width: 0;
  overflow: hidden;
  padding: 29px 220px 0 220px;
  border-left: 1px solid #333;
  box-shadow: -3px 0 #d2402a, 1px 0 #333, 4px 0 #d2402a;
  margin-left: 3px;
  margin-right: 10px;
  background: #fff;
  font-family: "Liberation Serif", serif;
  font-size: 36px;
  line-height: 48px;
  font-kerning: none;
  color: #000;
}
.page-header {
  display: flex;
  justify-content: space-between;
  font-family: Lato, sans-serif;
  font-size: 23px;
  line-height: 36px;
  font-variant-ligatures: none;
  color: #a6a6a6;
}
.page-header em {
  font-size: 26px;
}
.page h1 {
  margin: 79px 0 0;
  font-size: 48px;
  line-height: 56px;
  color: #c00000;
  text-shadow: 2px 2px 3px #999;
}
.page-body {
  display: flex;
  justify-content: space-between;
  align-items: flex-start;
  margin: 15px -64px 0 0;
}
.notes {
  flex: 1;
  padding-top: 44px;
}
.notes p {
  margin: 0;
  white-space: nowrap;
}
.notes .sub {
  padding-left: 108px;
}
.notes .spaced {
  margin-top: 142px;
}
.notes .last {
  margin-top: 190px;
}
.notes b {
  color: #0070c0;
}
.notes .red {
  color: #f00;
}
.notes .context, .notes .context b {
  color: #a6a6a6;
  font-style: italic;
}
.context small {
  font-size: 29px;
}
.graph {
  width: 439px;
  height: 435px;
  flex: none;
}
.pointer {
  position: absolute;
  right: 38px;
  bottom: 34px;
  width: 57px;
  height: 57px;
  border-radius: 50%;
  background: radial-gradient(circle, #00f 1px, #ffffa5 2px);
}
.scrollbar {
  display: flex;
  flex-direction: column;
  width: 17px;
  border-left: 1px solid #fff;
  background: #efefef;
}
.scrollbar button {
  display: flex;
  align-items: center;
  justify-content: center;
  height: 17px;
}
.scrollbar .up {
  transform: rotate(180deg);
}
.track {
  flex: 1;
  padding-top: 215px;
}
.thumb {
  height: 73px;
  background: #cdcdcd;
}

/* status bar */
.statusbar {
  display: flex;
  align-items: center;
  height: 25px;
}
.state {
  width: 100px;
  padding-left: 7px;
  border-right: 1px solid #fff;
}
.pager {
  margin-left: 742px;
  padding-left: 3px;
  border-left: 1px solid #fff;
}
.pager input {
  width: 37px;
  height: 22px;
  border: 1px solid #b5b5b5;
  background: #fff;
  text-align: center;
}
.views {
  margin-left: auto;
  padding: 0 2px 0 4px;
  border-left: 1px solid #fff;
}

/* taskbar */
.taskbar {
  display: flex;
  height: 40px;
  background: linear-gradient(90deg, #24261f, #27261e 15%, #382c1f 35%, #382c1f 75%, #222e20 90%);
  color: #fff;
}
.system {
  display: flex;
  width: 98px;
}
.task {
  display: flex;
  align-items: center;
  justify-content: center;
  position: relative;
  width: 49px;
}
.system .task {
  width: 48px;
}
.task svg {
  width: 24px;
  height: 24px;
}
.task.open::after {
  content: "";
  position: absolute;
  left: 4px;
  right: 4px;
  bottom: 0;
  height: 2px;
  background: #76b9ed;
}
.task.current {
  background: #59554b;
}
.task.current::after {
  left: 0;
  right: 0;
}
.tray {
  display: flex;
  align-items: center;
  margin-left: auto;
}
.tray button {
  display: flex;
  justify-content: center;
  width: 24px;
}
.tray svg {
  width: 16px;
  height: 16px;
  fill: none;
  stroke: #fff;
}
.tray .ink {
  width: 32px;
}
.lang, .clock {
  display: flex;
  flex-direction: column;
  align-items: center;
  width: 36px;
  line-height: 18px;
}
.clock {
  width: 72px;
}
.tray .action {
  width: 38px;
}
.show-desktop {
  width: 5px;
  height: 40px;
  margin-left: 9px;
  border-left: 1px solid #777;
}
```
